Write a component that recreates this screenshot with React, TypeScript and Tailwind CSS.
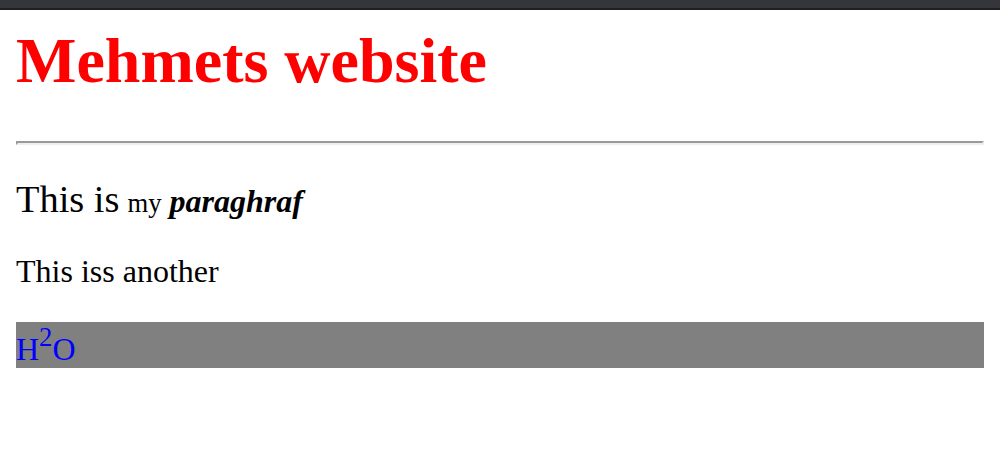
export default function App() {
  return (
    <div className="min-h-[468px] bg-white font-['Liberation_Serif','Times_New_Roman',serif] text-black">
      <div className="h-[10px] border-b-2 border-[#1f1f21] bg-[#35363a]" />
      <div className="px-4">
        <h1 className="mt-[14px] mb-[43px] text-[64px] font-bold leading-[normal] text-[#ff0000]">
          Mehmets website
        </h1>
        <hr className="border-t-2 border-l-2 border-b-2 border-r-2 border-t-[#9a9a9a] border-l-[#9a9a9a] border-b-[#eeeeee] border-r-[#eeeeee]" />
        <p className="mt-8 text-[32px] leading-[normal]">
          <span className="text-[38.4px]">This is</span> <small className="text-[26.67px]">my</small>{" "}
          <b>
            <i>paraghraf</i>
          </b>
        </p>
        <p className="mt-8 text-[32px] leading-[normal]">This iss another</p>
        <div className="mt-8 bg-[#808080] text-[32px] leading-[normal] text-[#0000ff]">
          H<sup className="static text-[26.67px] leading-[normal] align-[14px]">2</sup>O
        </div>
      </div>
    </div>
  );
}
